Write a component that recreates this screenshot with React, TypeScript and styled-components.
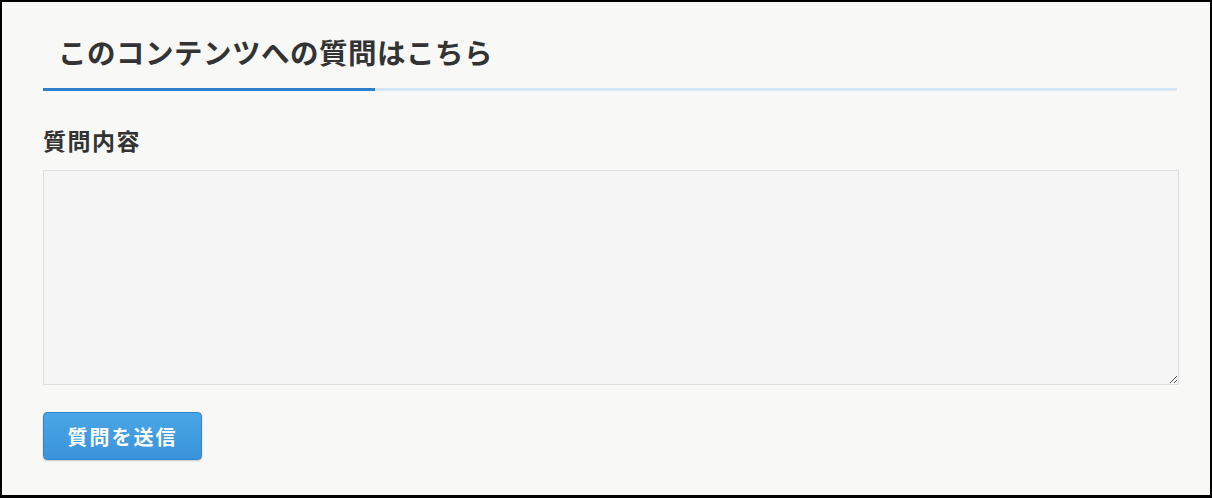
import styled, { createGlobalStyle } from "styled-components";

const GlobalStyle = createGlobalStyle`
  html, body {
    margin: 0;
    padding: 0;
    background: #000;
  }
  body {
    font-family: "Noto Sans CJK JP", "Noto Sans", sans-serif;
  }
`;

const Frame = styled.div`
  box-sizing: border-box;
  width: 1212px;
  height: 498px;
  border: 2px solid #000;
  border-bottom-width: 3px;
  background: #f8f8f6;
  padding: 0 33px 0 41px;
`;

const Heading = styled.h2`
  margin: 0;
  padding: 30px 0 0 15px;
  height: 56px;
  box-sizing: border-box;
  font-size: 28.5px;
  line-height: 40px;
  font-weight: 700;
  letter-spacing: 0.5px;
  color: #333;
`;

const Rule = styled.div`
  display: flex;
  height: 3px;
  margin-top: 30px;
`;

const RuleAccent = styled.div`
  width: 332px;
  background: #2a7fcf;
`;

const RuleRest = styled.div`
  flex: 1;
  background: #d3e6f8;
`;

const Field = styled.div`
  display: flex;
  flex-direction: column;
  margin-top: 33px;
`;

const Label = styled.label`
  font-size: 23px;
  line-height: 33px;
  font-weight: 700;
  letter-spacing: 1.5px;
  color: #333;
  margin-bottom: 13px;
`;

const TextArea = styled.textarea`
  box-sizing: border-box;
  width: 1136px;
  height: 215px;
  border: 1px solid #ddd;
  background: #f5f5f5;
  resize: vertical;
  outline: none;
  font-family: inherit;
`;

const SubmitButton = styled.button`
  box-sizing: border-box;
  margin-top: 27px;
  width: 159px;
  height: 48px;
  border: 1px solid #2f86cc;
  border-radius: 4px;
  background: linear-gradient(#4aa6e6, #3a93da);
  box-shadow: 0 1px 2px rgba(0, 0, 0, 0.2);
  color: #fff;
  font-family: inherit;
  font-size: 20px;
  font-weight: 700;
  letter-spacing: 2px;
  padding: 0;
  cursor: pointer;
`;

export default function App() {
  return (
    <>
      <GlobalStyle />
      <Frame>
        <Heading>このコンテンツへの質問はこちら</Heading>
        <Rule>
          <RuleAccent />
          <RuleRest />
        </Rule>
        <Field>
          <Label htmlFor="question">質問内容</Label>
          <TextArea id="question" />
        </Field>
        <SubmitButton type="button">質問を送信</SubmitButton>
      </Frame>
    </>
  );
}
